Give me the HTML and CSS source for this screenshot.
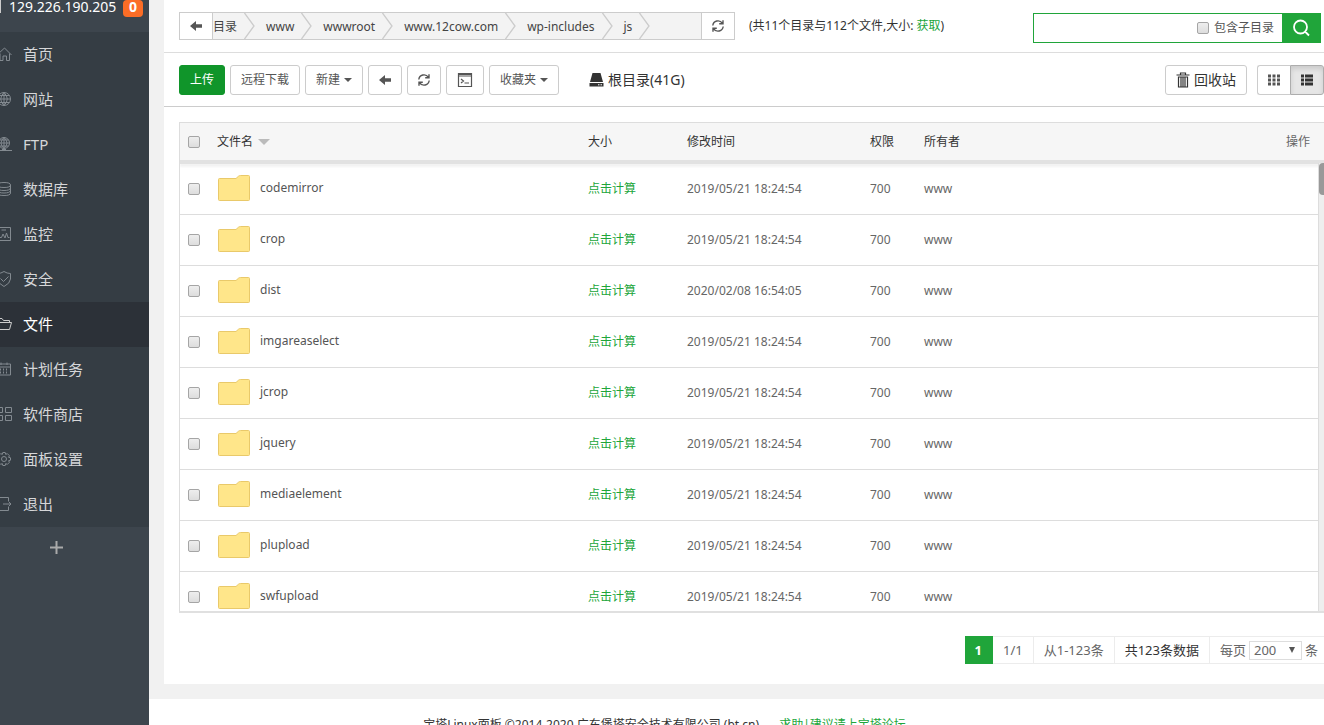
FILE: index.html
```
<!DOCTYPE html>
<html lang="zh-CN">
<head>
    <meta charset="UTF-8">
    <meta name="viewport" content="width=device-width, initial-scale=1.0">
    <title>宝塔Linux面板</title>
    <link rel="stylesheet" href="styles.css">
</head>
<body>
    <!-- shared icons -->
    <svg class="sprite" aria-hidden="true">
        <symbol id="icon-folder" viewBox="0 0 32 26">
            <path d="M.5 4.500Q.5 3.500 1.500 3.500H18L20.500 1.200Q21.300 .5 22.500 .5H30.500Q31.500 .5 31.500 1.500V24.500Q31.500 25.500 30.500 25.500H1.500Q.5 25.500 .5 24.500Z" fill="#ffe68a" stroke="#e9c96a" />
        </symbol>
        <symbol id="icon-left" viewBox="0 0 14 12">
            <path d="M1 6L7 1V4.300H13V7.700H7V11Z" fill="#555" />
        </symbol>
        <symbol id="icon-refresh" viewBox="0 0 14 14">
            <path d="M1.800 6.500A5.200 5.200 0 0 1 11.300 4.200M12.200 7.500A5.200 5.200 0 0 1 2.700 9.800M12 1.200V4.800H8.200M2 12.800V9.200H5.800" fill="none" stroke="#555" stroke-width="1.400" />
        </symbol>
        <symbol id="icon-chevron" viewBox="0 0 11 26">
            <path d="M.5 0L10 13L.5 26" fill="none" stroke="#ccc" stroke-width="1.300" />
        </symbol>
    </svg>

    <aside class="sidebar">
        <div class="server">
            <span class="server-bar"></span>
            <span class="server-ip">129.226.190.205</span>
            <span class="badge">0</span>
        </div>
        <nav class="menu">
            <a href="#"><svg viewBox="4 0 12 16"><path d="M1 9L8.500 2L15.500 9M4 7.500V14.500H7V10H10.500V14.500H13.500V7.500" /></svg>首页</a>
            <a href="#"><svg viewBox="4 0 12 16"><path d="M14.500 8A6.500 6.500 0 1 1 1.500 8A6.500 6.500 0 1 1 14.500 8M8 1.500V14.500M1.500 8H14.500M3 4.500H13M3 11.500H13M8 1.500Q1.500 8 8 14.500Q14.500 8 8 1.500" /></svg>网站</a>
            <a href="#"><svg viewBox="4 0 12 16"><path d="M13.500 7A5.500 5.500 0 1 1 2.500 7A5.500 5.500 0 1 1 13.500 7M8 1.500V14M3 7H13.500M3.500 4H12.500M3.500 10H12.500M8 1.500Q2 7 8 12.500Q14 7 8 1.500M1 14.500H16M6 13.500H10" /></svg>FTP</a>
            <a href="#"><svg viewBox="4 0 12 16"><path d="M1.500 4Q1.500 1.500 8 1.500T14.500 4T8 6.500T1.500 4V12Q1.500 14.500 8 14.500T14.500 12V4M1.500 7Q2 9.500 8 9.500T14.500 7M1.500 9.500Q2 12 8 12T14.500 9.500" /></svg>数据库</a>
            <a href="#"><svg viewBox="4 0 12 16"><path d="M1.500 1.500H14.500V14.500H1.500ZM3 11.500H5.500L7 8L9 12L10.500 7L12 11.500H13.500M5.500 4H10" /></svg>监控</a>
            <a href="#"><svg viewBox="4 0 12 16"><path d="M8 .5Q11 2.500 14.500 2.500V8Q14 12.500 8 15.500Q2 12.500 1.500 8V2.500Q5 2.500 8 .5ZM4.500 7.500L7.500 10.500L12.500 5.500" /></svg>安全</a>
            <a href="#" class="active"><svg viewBox="4 0 12 16"><path d="M1.500 13.500V2.500H6L7.500 4.500H13.500V6.500M1.500 13.500L3.500 6.500H15.500L13.500 13.500Z" /></svg>文件</a>
            <a href="#"><svg viewBox="4 0 12 16"><path d="M1.500 3H14.500V14H1.500ZM1.500 6H14.500M5 1.500V4M11 1.500V4" /><path d="M4 8.500H13M4 11.500H13" stroke-width="2" stroke-dasharray="1 2" /></svg>计划任务</a>
            <a href="#"><svg viewBox="4 0 12 16"><path d="M1.500 1.500H6.500V6.500H1.500ZM9.500 1.500H15.500V6.500H9.500ZM1.500 9.500H6.500V14.500H1.500ZM9.500 9.500H15.500V14.500H9.500Z" /></svg>软件商店</a>
            <a href="#"><svg viewBox="4 0 12 16"><path d="M6.800 1.500H9.200L9.700 3.400L11.300 2.600L13.400 4.700L12.600 6.300L14.500 6.800V9.200L12.600 9.700L13.400 11.300L11.300 13.400L9.700 12.600L9.200 14.500H6.800L6.300 12.600L4.700 13.400L2.600 11.300L3.400 9.700L1.500 9.200V6.800L3.400 6.300L2.600 4.700L4.700 2.600L6.300 3.400ZM10.500 8A2.500 2.500 0 1 1 5.500 8A2.500 2.500 0 1 1 10.500 8" /></svg>面板设置</a>
            <a href="#"><svg viewBox="4 0 12 16"><path d="M12.500 5V1.500H2V14.500H12.500V11M7 8H15M12.500 5.500L15 8L12.500 10.500" /></svg>退出</a>
        </nav>
        <button type="button" class="add-menu" aria-label="添加">
            <svg width="13" height="13" viewBox="0 0 13 13"><path d="M6.500 0V13M0 6.500H13" stroke="#aaa" stroke-width="2" /></svg>
        </button>
    </aside>

    <div class="main">
        <main class="panel">
            <div class="path-row">
                <div class="path">
                    <button type="button" class="path-btn" aria-label="返回"><svg width="14" height="12"><use href="#icon-left" /></svg></button>
                    <ul class="crumbs">
                        <li><a href="#">目录</a><svg><use href="#icon-chevron" /></svg></li>
                        <li><a href="#">www</a><svg><use href="#icon-chevron" /></svg></li>
                        <li><a href="#">wwwroot</a><svg><use href="#icon-chevron" /></svg></li>
                        <li><a href="#">www.12cow.com</a><svg><use href="#icon-chevron" /></svg></li>
                        <li><a href="#">wp-includes</a><svg><use href="#icon-chevron" /></svg></li>
                        <li><a href="#">js</a><svg><use href="#icon-chevron" /></svg></li>
                    </ul>
                    <button type="button" class="path-btn" aria-label="刷新"><svg width="14" height="14"><use href="#icon-refresh" /></svg></button>
                </div>
                <div class="summary">(共11个目录与112个文件,大小: <a href="#">获取</a>)</div>
                <form class="search">
                    <input type="text" class="search-text" aria-label="搜索">
                    <input type="checkbox" id="subdirs">
                    <label for="subdirs">包含子目录</label>
                    <button type="button" aria-label="搜索">
                        <svg width="18" height="18" viewBox="0 0 18 18"><path d="M15 8A6.500 6.500 0 1 1 2 8A6.500 6.500 0 1 1 15 8M13 12.500L17 16.500" fill="none" stroke="#fff" stroke-width="1.800" /></svg>
                    </button>
                </form>
            </div>

            <div class="toolbar">
                <button type="button" class="btn btn-green">上传</button>
                <button type="button" class="btn">远程下载</button>
                <button type="button" class="btn">新建<span class="caret"></span></button>
                <button type="button" class="btn btn-icon" aria-label="后退"><svg width="14" height="12"><use href="#icon-left" /></svg></button>
                <button type="button" class="btn btn-icon" aria-label="刷新"><svg width="14" height="14"><use href="#icon-refresh" /></svg></button>
                <button type="button" class="btn" aria-label="终端">
                    <svg width="16" height="16" viewBox="0 0 16 16"><path d="M1.500 1.500H14.500V14.500H1.500ZM1.500 4H14.500M4 7L6.500 9L4 11M7.500 11H12" fill="none" stroke="#555" stroke-width="1.200" /><path d="M1 1H15V3H1Z" fill="#555" /></svg>
                </button>
                <button type="button" class="btn">收藏夹<span class="caret"></span></button>
                <a href="#" class="disk">
                    <svg width="15" height="15" viewBox="0 0 15 15"><path d="M3.500 1H11.500L14 10H1ZM.5 11H14.500V14.500H.5Z" fill="#333" /><path d="M9 12.800H10.500M11.500 12.800H13" stroke="#fff" /></svg>
                    根目录(41G)
                </a>
                <button type="button" class="btn recycle">
                    <svg width="14" height="16" viewBox="0 0 14 16"><path d="M.5 3H13.500M4.500 3V1H9.500V3M2.500 5V15H11.500V5ZM5 5V15M7 5V15M9 5V15" fill="none" stroke="#333" stroke-width="1.200" /></svg>
                    回收站
                </button>
                <div class="view-switch">
                    <button type="button" class="btn" aria-label="图标视图">
                        <svg width="12" height="12" viewBox="0 0 12 12"><path d="M0 2H12M0 6H12M0 10H12" stroke="#555" stroke-width="3" stroke-dasharray="3 1.500" /></svg>
                    </button>
                    <button type="button" class="btn active" aria-label="列表视图">
                        <svg width="12" height="12" viewBox="0 0 12 12"><path d="M0 2H3M4 2H12M0 6H3M4 6H12M0 10H3M4 10H12" stroke="#333" stroke-width="3" /></svg>
                    </button>
                </div>
            </div>

            <div class="files">
                <table>
                    <thead>
                        <tr>
                            <th class="col-check"><input type="checkbox" aria-label="全选"></th>
                            <th class="col-name">文件名<span class="sort"></span></th>
                            <th class="col-size">大小</th>
                            <th class="col-time">修改时间</th>
                            <th class="col-mode">权限</th>
                            <th class="col-owner">所有者</th>
                            <th class="col-action">操作</th>
                        </tr>
                    </thead>
                    <tbody>
                        <tr>
                            <td><input type="checkbox" aria-label="codemirror"></td>
                            <td><a href="#" class="file"><svg><use href="#icon-folder" /></svg>codemirror</a></td>
                            <td><a href="#">点击计算</a></td>
                            <td>2019/05/21 18:24:54</td>
                            <td>700</td>
                            <td>www</td>
                            <td></td>
                        </tr>
                        <tr>
                            <td><input type="checkbox" aria-label="crop"></td>
                            <td><a href="#" class="file"><svg><use href="#icon-folder" /></svg>crop</a></td>
                            <td><a href="#">点击计算</a></td>
                            <td>2019/05/21 18:24:54</td>
                            <td>700</td>
                            <td>www</td>
                            <td></td>
                        </tr>
                        <tr>
                            <td><input type="checkbox" aria-label="dist"></td>
                            <td><a href="#" class="file"><svg><use href="#icon-folder" /></svg>dist</a></td>
                            <td><a href="#">点击计算</a></td>
                            <td>2020/02/08 16:54:05</td>
                            <td>700</td>
                            <td>www</td>
                            <td></td>
                        </tr>
                        <tr>
                            <td><input type="checkbox" aria-label="imgareaselect"></td>
                            <td><a href="#" class="file"><svg><use href="#icon-folder" /></svg>imgareaselect</a></td>
                            <td><a href="#">点击计算</a></td>
                            <td>2019/05/21 18:24:54</td>
                            <td>700</td>
                            <td>www</td>
                            <td></td>
                        </tr>
                        <tr>
                            <td><input type="checkbox" aria-label="jcrop"></td>
                            <td><a href="#" class="file"><svg><use href="#icon-folder" /></svg>jcrop</a></td>
                            <td><a href="#">点击计算</a></td>
                            <td>2019/05/21 18:24:54</td>
                            <td>700</td>
                            <td>www</td>
                            <td></td>
                        </tr>
                        <tr>
                            <td><input type="checkbox" aria-label="jquery"></td>
                            <td><a href="#" class="file"><svg><use href="#icon-folder" /></svg>jquery</a></td>
                            <td><a href="#">点击计算</a></td>
                            <td>2019/05/21 18:24:54</td>
                            <td>700</td>
                            <td>www</td>
                            <td></td>
                        </tr>
                        <tr>
                            <td><input type="checkbox" aria-label="mediaelement"></td>
                            <td><a href="#" class="file"><svg><use href="#icon-folder" /></svg>mediaelement</a></td>
                            <td><a href="#">点击计算</a></td>
                            <td>2019/05/21 18:24:54</td>
                            <td>700</td>
                            <td>www</td>
                            <td></td>
                        </tr>
                        <tr>
                            <td><input type="checkbox" aria-label="plupload"></td>
                            <td><a href="#" class="file"><svg><use href="#icon-folder" /></svg>plupload</a></td>
                            <td><a href="#">点击计算</a></td>
                            <td>2019/05/21 18:24:54</td>
                            <td>700</td>
                            <td>www</td>
                            <td></td>
                        </tr>
                        <tr>
                            <td><input type="checkbox" aria-label="swfupload"></td>
                            <td><a href="#" class="file"><svg><use href="#icon-folder" /></svg>swfupload</a></td>
                            <td><a href="#">点击计算</a></td>
                            <td>2019/05/21 18:24:54</td>
                            <td>700</td>
                            <td>www</td>
                            <td></td>
                        </tr>
                    </tbody>
                </table>
                <div class="scrollbar"><div class="thumb"></div></div>
            </div>

            <div class="pages">
                <span class="current">1</span>
                <span>1/1</span>
                <span>从1-123条</span>
                <span class="total">共123条数据</span>
                <span class="per-page">
                    <label for="pageSize">每页</label>
                    <select id="pageSize">
                        <option>200</option>
                    </select>
                    条
                </span>
            </div>
        </main>

        <footer>宝塔Linux面板 ©2014-2020 广东堡塔安全技术有限公司 (bt.cn) <a href="#">求助|建议请上宝塔论坛</a></footer>
    </div>
</body>
</html>
```
FILE: styles.css
```
* {
    box-sizing: border-box;
}

body {
    display: flex;
    height: 100vh;
    margin: 0;
    overflow: hidden;
    background: #f1f1f1;
    color: #333;
    font-family: "Noto Sans", "Noto Sans CJK SC", sans-serif;
    font-size: 12px;
    line-height: 18px;
}

button, input, select {
    font: inherit;
    color: inherit;
    margin: 0;
}

button {
    cursor: pointer;
}

a {
    color: #20a53a;
    text-decoration: none;
}

svg {
    flex: none;
}

.sprite {
    position: absolute;
    width: 0;
    height: 0;
}

input[type="checkbox"] {
    appearance: none;
    display: block;
    flex: none;
    width: 12px;
    height: 12px;
    border: 1px solid #a5a5a5;
    border-radius: 2px;
    background: linear-gradient(#eee, #ddd);
}

/* sidebar */
.sidebar {
    flex: none;
    width: 149px;
    background: #3d454d;
}

.server {
    display: flex;
    align-items: flex-start;
    height: 32px;
    color: #fff;
    font-size: 14px;
    line-height: 14px;
}

.server-bar {
    width: 1px;
    height: 13px;
    margin-right: 8px;
    background: #ccc;
}

.badge {
    width: 20px;
    height: 17px;
    margin-left: auto;
    margin-right: 6px;
    border-radius: 4px;
    background: #fc6d26;
    text-align: center;
    font-weight: bold;
}

.menu a {
    display: flex;
    align-items: center;
    gap: 11px;
    height: 45px;
    padding-bottom: 2px;
    background: #353d44;
    color: #d6d7d9;
    font-size: 15px;
}

.menu svg {
    width: 12px;
    height: 16px;
    fill: none;
    stroke: #838a90;
}

.menu a.active {
    background: #2c3138;
    color: #fff;
}

.menu .active svg {
    stroke: #ccc;
}

.add-menu {
    display: block;
    width: 113px;
    padding: 14px 0;
    border: none;
    background: none;
    line-height: 0;
}

/* main column */
.main {
    flex: 1;
    min-width: 0;
}

.panel {
    margin: 0 0 15px 15px;
    padding-bottom: 20px;
    background: #fff;
}

.path-row {
    display: flex;
    align-items: flex-start;
    height: 53px;
    padding: 12px 3px 0 15px;
    border-bottom: 1px solid #ddd;
}

.path {
    display: flex;
    flex: 0 1 556px;
    height: 28px;
    border: 1px solid #ccc;
    background: #f3f3f3;
}

.path-btn {
    display: flex;
    align-items: center;
    justify-content: center;
    width: 33px;
    padding: 0;
    border: none;
    border-right: 1px solid #ccc;
    background: #fff;
}

.path-btn:last-child {
    border-right: none;
    border-left: 1px solid #ccc;
}

.crumbs {
    display: flex;
    flex: 1;
    margin: 0;
    padding: 0;
    list-style: none;
}

.crumbs li {
    display: flex;
}

.crumbs a {
    padding: 0 7px 0 11px;
    color: #444;
    line-height: 28px;
}

.crumbs li:first-child a {
    padding-left: 0;
}

.crumbs svg {
    width: 11px;
    height: 26px;
}

.summary {
    margin-left: 14px;
    line-height: 28px;
}

.search {
    display: flex;
    align-items: center;
    flex: 0 1 288px;
    height: 30px;
    margin-left: auto;
    margin-top: 1px;
    border: 1px solid #20a53a;
    color: #555;
}

.search-text {
    flex: 1;
    min-width: 0;
    border: none;
    outline: none;
    background: none;
}

.search label {
    margin: 0 8px 0 5px;
}

.search button {
    display: flex;
    align-items: center;
    justify-content: center;
    align-self: stretch;
    width: 38px;
    padding: 0;
    border: none;
    background: #20a53a;
}

.toolbar {
    display: flex;
    align-items: center;
    gap: 5px;
    height: 54px;
    padding-left: 15px;
    border-bottom: 1px solid #ccc;
}

.btn {
    display: flex;
    align-items: center;
    justify-content: center;
    height: 30px;
    padding: 0 10px;
    border: 1px solid #ccc;
    border-radius: 3px;
    background: #fff;
    color: #555;
}

.btn-icon {
    padding: 0 9px;
}

.btn-green {
    border-color: #10952a;
    background: #10952a;
    color: #fff;
}

.caret {
    margin-left: 4px;
    border: 4px solid transparent;
    border-top-color: #555;
    border-bottom: 0;
}

.disk {
    display: flex;
    align-items: center;
    gap: 4px;
    margin-left: 25px;
    color: #333;
    font-size: 14px;
}

.recycle {
    gap: 4px;
    margin-left: auto;
    color: #333;
    font-size: 14px;
}

.view-switch {
    display: flex;
    margin-left: 5px;
}

.view-switch .btn:first-child {
    border-right: none;
    border-radius: 3px 0 0 3px;
}

.view-switch .btn.active {
    border-color: #adadad;
    border-radius: 0 3px 3px 0;
    background: #e6e6e6;
    box-shadow: inset 0 3px 5px rgba(0,0,0,0.12);
}

/* file list */
.files {
    position: relative;
    height: calc(100vh - 234px);
    margin: 15px 0 0 15px;
    overflow: hidden;
    border: 1px solid #ddd;
    border-right: none;
    border-bottom: 2px solid #e0e0e0;
}

table {
    width: 100%;
    table-layout: fixed;
    border-collapse: separate;
    border-spacing: 0;
}

thead {
    position: sticky;
    top: 0;
    box-shadow: 0 3px 2px #f3f3f3;
}

th {
    height: 41px;
    padding: 0 8px;
    border-bottom: 4px solid #e2e2e2;
    background: #f6f6f6;
    font-weight: normal;
    text-align: left;
}

td {
    height: 51px;
    padding: 0 8px;
    border-bottom: 1px solid #ddd;
    color: #666;
}

.col-check {
    width: 29px;
}

.col-name {
    width: 371px;
}

.col-size {
    width: 99px;
}

.col-time {
    width: 183px;
}

.col-mode {
    width: 54px;
}

.col-owner {
    width: 200px;
}

.col-action {
    padding-right: 14px;
    color: #666;
    text-align: right;
}

.sort {
    display: inline-block;
    margin-left: 5px;
    border: 6px solid transparent;
    border-top-color: #bbb;
    border-bottom: 0;
    vertical-align: 1px;
}

.file {
    display: flex;
    align-items: center;
    gap: 10px;
    padding: 0 0 3px 1px;
    color: #555;
}

.file svg {
    width: 32px;
    height: 26px;
}

.scrollbar {
    position: absolute;
    top: 40px;
    right: 0;
    bottom: 0;
    width: 6px;
    border-left: 1px solid #ddd;
    background: #eee;
}

.thumb {
    height: 32px;
    border-radius: 4px 0 0 4px;
    background: #999;
}

/* pagination */
.pages {
    display: flex;
    justify-content: flex-end;
    margin-top: 23px;
    color: #666;
    font-size: 13px;
}

.pages > span {
    display: flex;
    align-items: center;
    height: 28px;
    padding: 0 10px;
    border: 1px solid #ececec;
    border-left: none;
}

.pages .current {
    border-color: #20a53a;
    background: #20a53a;
    color: #fff;
    font-weight: bold;
}

.pages .total {
    color: #333;
}

.pages .per-page {
    gap: 3px;
    padding-right: 6px;
    border-right: none;
}

.per-page select {
    appearance: none;
    width: 53px;
    height: 19px;
    padding: 0 4px;
    border: 1px solid #ddd;
    border-radius: 0;
    background: #fff url("data:image/svg+xml,%3Csvg xmlns='http://www.w3.org/2000/svg' width='6' height='6'%3E%3Cpath d='M0 0H6L3 6Z' fill='%23555'/%3E%3C/svg%3E") no-repeat right 6px center;
    line-height: 17px;
}

footer {
    height: 60px;
    padding: 17px 144px 0 0;
    background: #fff;
    text-align: center;
}

footer a {
    margin-left: 17px;
}
```
